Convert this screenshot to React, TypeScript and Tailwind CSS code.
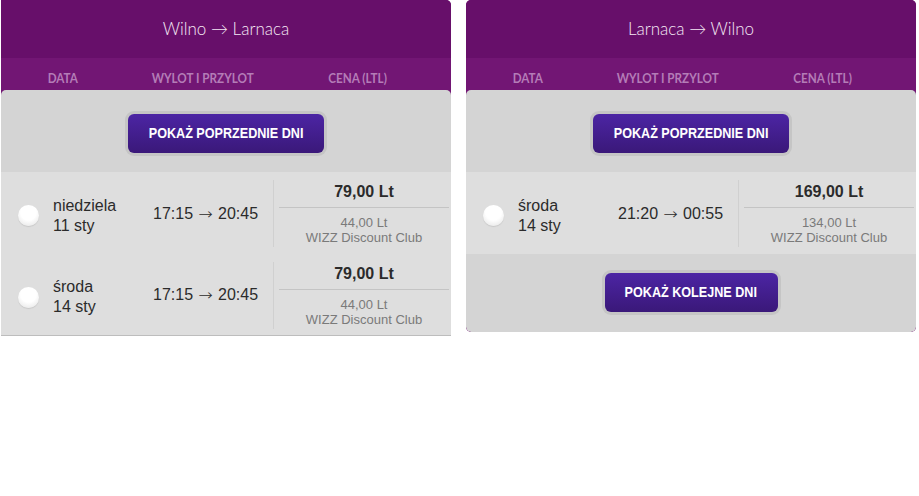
import React from "react";

type Flight = {
  day: string;
  date: string;
  dep: string;
  arr: string;
  price: string;
  club: string;
};

const outbound: Flight[] = [
  { day: "niedziela", date: "11 sty", dep: "17:15", arr: "20:45", price: "79,00 Lt", club: "44,00 Lt" },
  { day: "środa", date: "14 sty", dep: "17:15", arr: "20:45", price: "79,00 Lt", club: "44,00 Lt" },
];

const inbound: Flight[] = [
  { day: "środa", date: "14 sty", dep: "21:20", arr: "00:55", price: "169,00 Lt", club: "134,00 Lt" },
];

function PillButton({ label, width }: { label: string; width: string }) {
  return (
    <div className="flex justify-center">
      <div className="rounded-[9px] bg-[#c5c5c5] p-[3px]">
        <button
          className={`flex h-[39px] ${width} items-center justify-center rounded-[6px] bg-gradient-to-b from-[#4c25a4] to-[#3a1879] font-['Liberation_Sans',Arial,sans-serif] text-[15px] font-bold text-white`}
        >
          <span className="inline-block scale-x-[0.84] whitespace-nowrap">{label}</span>
        </button>
      </div>
    </div>
  );
}

function Radio() {
  return (
    <div className="h-[21px] w-[21px] shrink-0 rounded-full bg-[radial-gradient(circle_at_50%_35%,#ffffff_45%,#ececec_80%,#dedede_100%)] shadow-[0_1px_1px_rgba(0,0,0,0.1)]" />
  );
}

function FlightRow({ f, last }: { f: Flight; last?: boolean }) {
  return (
    <div className={`flex ${last ? "h-[81px]" : "h-[82px]"}`}>
      <div className="flex w-[272px] items-center">
        <div className="ml-[17px] mt-[5px] flex items-center">
          <Radio />
          <div className="ml-[14px] w-[100px] text-[16px] leading-[20px] text-[#2b2b2b]">
            <div>{f.day}</div>
            <div>{f.date}</div>
          </div>
        </div>
        <div className="mt-[1px] flex items-center whitespace-nowrap text-[16px] leading-[20px] text-[#2b2b2b]">
          <span>{f.dep}</span>
          <span className="mx-[4px] inline-block w-[17px] scale-x-[1.15] text-center font-['DejaVu_Sans',sans-serif] text-[15px] font-light">
            →
          </span>
          <span>{f.arr}</span>
        </div>
      </div>
      <div className="mt-[8px] h-[67px] border-l border-[#d0d0d0] pl-[5px]">
        <div className="w-[170px] text-center">
          <div className="h-[28px] border-b border-[#c4c4c4] pt-[3px] text-[16px] font-bold leading-[18px] text-[#2b2b2b]">
            {f.price}
          </div>
          <div className="pt-[7px] text-[13px] leading-[15px] text-[#7a7a7a]">
            <div>{f.club}</div>
            <div>WIZZ Discount Club</div>
          </div>
        </div>
      </div>
    </div>
  );
}

function Panel({
  title,
  flights,
  next,
  cornerClass,
}: {
  title: string;
  flights: Flight[];
  next?: boolean;
  cornerClass: string;
}) {
  return (
    <div className={`w-[450px] overflow-hidden bg-[#721674] ${cornerClass}`}>
      <div className="flex h-[58px] items-center justify-center bg-[#670f6a] font-['Lato',sans-serif] text-[17px] font-light text-[#f5e9f5]">
        {title}
      </div>
      <div className="flex h-[32px] pt-[13px] font-['Lato',sans-serif] text-[13px] font-bold leading-[14px] text-[#b47cb7]">
        <div className="w-[124px] text-center">
          <span className="inline-block scale-x-[0.9]">DATA</span>
        </div>
        <div className="w-[156px] text-center">
          <span className="inline-block scale-x-[0.9]">WYLOT I PRZYLOT</span>
        </div>
        <div className="w-[154px] text-center">
          <span className="inline-block scale-x-[0.9]">CENA (LTL)</span>
        </div>
      </div>
      <div className={`overflow-hidden rounded-t-[5px] bg-[#d4d4d4] ${next ? "rounded-b-[5px]" : ""}`}>
        <div className="pb-[16px] pt-[21px]">
          <PillButton label="POKAŻ POPRZEDNIE DNI" width="w-[196px]" />
        </div>
        <div className={`bg-[#dedede] ${next ? "" : "border-b border-[#bdbdbd]"}`}>
          {flights.map((f, i) => (
            <FlightRow key={i} f={f} last={!next && i === flights.length - 1 && flights.length > 1} />
          ))}
        </div>
        {next && (
          <div className="pb-[17px] pt-[16px]">
            <PillButton label="POKAŻ KOLEJNE DNI" width="w-[173px]" />
          </div>
        )}
      </div>
    </div>
  );
}

export default function App() {
  return (
    <div className="flex h-[496px] w-[919px] items-start gap-[15px] bg-white pl-[1px] font-['Liberation_Sans',Arial,sans-serif]">
      <Panel title="Wilno → Larnaca" flights={outbound} cornerClass="rounded-tr-[5px]" />
      <Panel title="Larnaca → Wilno" flights={inbound} next cornerClass="rounded-t-[5px] rounded-b-[5px]" />
    </div>
  );
}
